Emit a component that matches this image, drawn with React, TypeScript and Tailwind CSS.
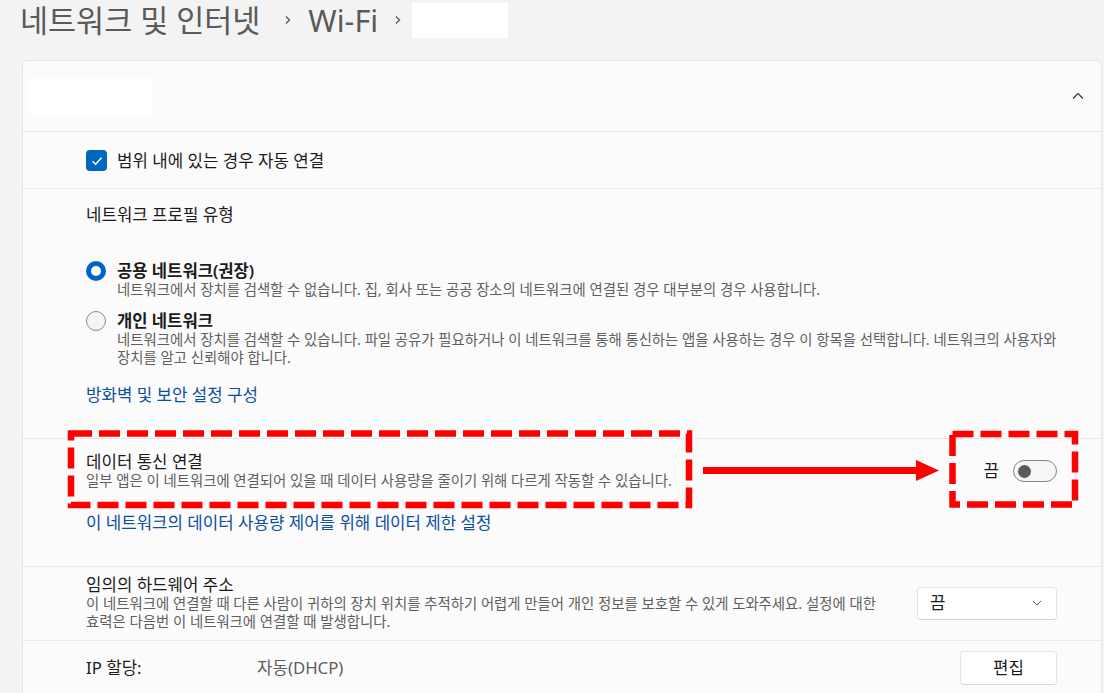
import type { ReactNode } from 'react'

const fontStack = "font-['Noto_Sans','Noto_Sans_CJK_KR',sans-serif]"

function Crumb({ className = '' }: { className?: string }) {
  return (
    <svg width="8" height="12" viewBox="0 0 8 12" className={className}>
      <path d="M2 2.5 L5.5 6 L2 9.5" fill="none" stroke="#5c5c5c" strokeWidth="1.4" />
    </svg>
  )
}

function CheckBox() {
  return (
    <span className="flex h-[21px] w-[21px] shrink-0 items-center justify-center rounded-[4px] bg-[#0067c0]">
      <svg width="12" height="10" viewBox="0 0 12 10">
        <path d="M1.5 5.2 L4.6 8.2 L10.5 1.8" fill="none" stroke="#fff" strokeWidth="1.4" />
      </svg>
    </span>
  )
}

function Radio({ checked }: { checked?: boolean }) {
  if (checked) {
    return (
      <span className="flex h-[20px] w-[20px] shrink-0 items-center justify-center rounded-full bg-[#0067c0]">
        <span className="h-[10px] w-[10px] rounded-full bg-white" />
      </span>
    )
  }
  return <span className="h-[20px] w-[20px] shrink-0 rounded-full border border-[#8b8b8b] bg-[#f5f5f5]" />
}

function RadioOption({ checked, title, children }: { checked?: boolean; title: string; children: ReactNode }) {
  return (
    <div className="flex items-start gap-[11px]">
      <Radio checked={checked} />
      <div>
        <div className="text-[16.6px] font-semibold leading-[20px] text-[#1b1b1b]">{title}</div>
        <div className="text-[14.4px] leading-[18px] text-[#5f5f5f]">{children}</div>
      </div>
    </div>
  )
}

function Toggle() {
  return (
    <span className="flex h-[22px] w-[44px] items-center rounded-full border border-[#858585] bg-[#f6f6f6] pl-[4px]">
      <span className="h-[13px] w-[13px] rounded-full bg-[#5b5b5b]" />
    </span>
  )
}

function Annotations() {
  return (
    <svg className="pointer-events-none absolute left-0 top-0" width="1104" height="693" viewBox="0 0 1104 693">
      <rect x="71" y="433.5" width="618" height="71.5" fill="none" stroke="#ff0000" strokeWidth="6.5" strokeDasharray="21 7" />
      <rect x="952.5" y="434" width="122.5" height="70.5" fill="none" stroke="#ff0000" strokeWidth="6.5" strokeDasharray="21 7" />
      <line x1="703" y1="470.5" x2="918" y2="470.5" stroke="#ff0000" strokeWidth="7" />
      <polygon points="916,460 939,470.5 916,481" fill="#ff0000" />
    </svg>
  )
}

export default function App() {
  return (
    <div className={`relative h-[693px] w-[1104px] overflow-hidden bg-[#f3f3f3] text-[#1b1b1b] ${fontStack}`}>
      <header className="flex h-[40px] items-center pl-[20px] text-[30.5px] leading-[40px] text-[#5a5a5a]">
        <span>네트워크 및 인터넷</span>
        <Crumb className="ml-[24px] mr-[16px]" />
        <span>Wi-Fi</span>
        <Crumb className="ml-[16px] mr-[10px]" />
        <span className="h-[35px] w-[96px] bg-white" />
      </header>

      <section className="ml-[22px] mt-[20px] w-[1080px] rounded-t-[6px] border border-[#e5e5e5] bg-[#fbfbfb]">
        <div className="flex h-[71px] items-center justify-between border-b border-[#e8e8e8] pl-[5px] pr-[17px]">
          <span className="h-[37px] w-[124px] rounded-[2px] bg-white" />
          <svg width="12" height="8" viewBox="0 0 12 8">
            <path d="M1 6.5 L6 1.5 L11 6.5" fill="none" stroke="#333" strokeWidth="1.2" />
          </svg>
        </div>

        <div className="flex h-[57px] items-center gap-[10px] border-b border-[#eaeaea] pl-[63px] pt-[1px]">
          <CheckBox />
          <span className="text-[16.8px] leading-[20px]">범위 내에 있는 경우 자동 연결</span>
        </div>

        <div className="border-b border-[#eaeaea] pb-[33px] pl-[63px] pt-[16px]">
          <div className="text-[16.8px] leading-[20px]">네트워크 프로필 유형</div>
          <div className="mt-[36px] flex flex-col gap-[12px]">
            <RadioOption checked title="공용 네트워크(권장)">
              네트워크에서 장치를 검색할 수 없습니다. 집, 회사 또는 공공 장소의 네트워크에 연결된 경우 대부분의 경우 사용합니다.
            </RadioOption>
            <RadioOption title="개인 네트워크">
              네트워크에서 장치를 검색할 수 있습니다. 파일 공유가 필요하거나 이 네트워크를 통해 통신하는 앱을 사용하는 경우 이 항목을 선택합니다. 네트워크의 사용자와
              <br />
              장치를 알고 신뢰해야 합니다.
            </RadioOption>
          </div>
          <div className="mt-[18px] text-[16.8px] leading-[20px] text-[#0b4f9f]">방화벽 및 보안 설정 구성</div>
        </div>

        <div className="border-b border-[#eaeaea] pb-[33px] pl-[63px] pr-[44px] pt-[13px]">
          <div className="flex items-center justify-between">
            <div>
              <div className="text-[16.8px] leading-[20px]">데이터 통신 연결</div>
              <div className="text-[14.4px] leading-[18px] text-[#5f5f5f]">
                일부 앱은 이 네트워크에 연결되어 있을 때 데이터 사용량을 줄이기 위해 다르게 작동할 수 있습니다.
              </div>
            </div>
            <div className="flex items-center gap-[14px]">
              <span className="text-[16.8px] leading-[20px]">끔</span>
              <Toggle />
            </div>
          </div>
          <div className="mt-[23px] text-[16.8px] leading-[20px] text-[#0b4f9f]">
            이 네트워크의 데이터 사용량 제어를 위해 데이터 제한 설정
          </div>
        </div>

        <div className="flex items-center justify-between border-b border-[#eaeaea] pb-[9px] pl-[63px] pr-[44px] pt-[8px]">
          <div>
            <div className="text-[16.8px] leading-[20px]">임의의 하드웨어 주소</div>
            <div className="text-[14.4px] leading-[18px] text-[#5f5f5f]">
              이 네트워크에 연결할 때 다른 사람이 귀하의 장치 위치를 추적하기 어렵게 만들어 개인 정보를 보호할 수 있게 도와주세요. 설정에 대한
              <br />
              효력은 다음번 이 네트워크에 연결할 때 발생합니다.
            </div>
          </div>
          <div className="flex h-[33px] w-[140px] items-center justify-between rounded-[4px] border border-[#e5e5e5] border-b-[#d6d6d6] bg-white pl-[12px] pr-[14px]">
            <span className="text-[16.8px]">끔</span>
            <svg width="10" height="6" viewBox="0 0 10 6">
              <path d="M1 1 L5 5 L9 1" fill="none" stroke="#555" strokeWidth="1" />
            </svg>
          </div>
        </div>

        <div className="flex items-center justify-between pb-[20px] pl-[63px] pr-[44px] pt-[10px]">
          <div className="flex items-center text-[16.8px] leading-[20px]">
            <span className="w-[171px]">IP 할당:</span>
            <span className="text-[#5f5f5f]">자동(DHCP)</span>
          </div>
          <button className="flex h-[34px] w-[97px] items-center justify-center rounded-[4px] border border-[#e5e5e5] border-b-[#d6d6d6] bg-white text-[16.8px]">
            편집
          </button>
        </div>
      </section>

      <Annotations />
    </div>
  )
}
